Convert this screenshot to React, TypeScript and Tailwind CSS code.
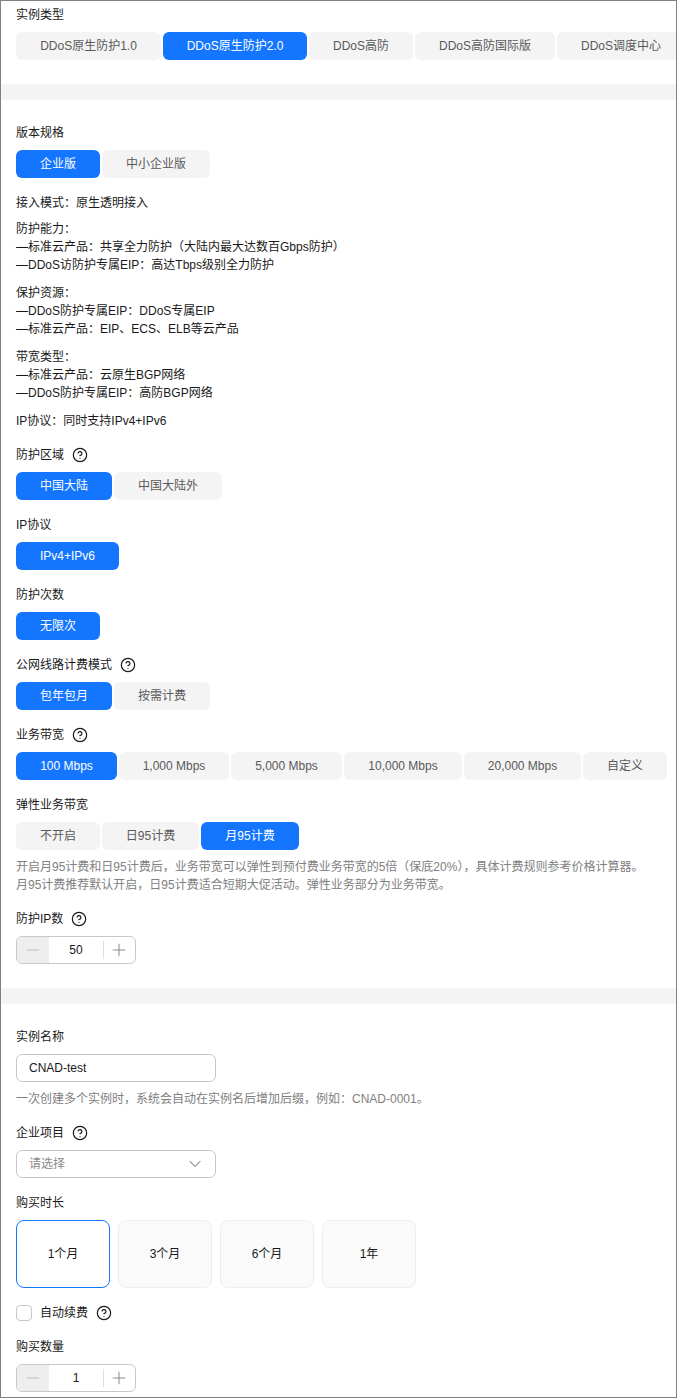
import { ChevronDown, CircleHelp, Minus, Plus } from "lucide-react";
import type { ReactNode } from "react";

type Opt = { text: string; width: string; active?: boolean };

function Label({ text, help }: { text: string; help?: boolean }) {
  return (
    <div className="flex h-[18px] items-center gap-[8px] pt-[2px] text-[12px] leading-[16px] text-[#191919]">
      <span>{text}</span>
      {help && <CircleHelp size={16} strokeWidth={1.75} className="text-[#191919]" />}
    </div>
  );
}

function Options({ items }: { items: Opt[] }) {
  return (
    <div className="mt-[9px] flex gap-[2px]">
      {items.map((o) => (
        <div
          key={o.text}
          className={
            o.active
              ? "flex h-[28px] shrink-0 items-center justify-center rounded-[6px] bg-[#1476ff] text-[12px] text-white " + o.width
              : "flex h-[28px] shrink-0 items-center justify-center rounded-[6px] bg-[#f4f4f4] text-[12px] text-[#595959] " + o.width
          }
        >
          {o.text}
        </div>
      ))}
    </div>
  );
}

function Field({ label, help, className, children }: { label: string; help?: boolean; className?: string; children: ReactNode }) {
  return (
    <div className={className}>
      <Label text={label} help={help} />
      {children}
    </div>
  );
}

function Stepper({ value }: { value: string }) {
  return (
    <div className="mt-[9px] flex h-[28px] w-[120px] items-center overflow-hidden rounded-[6px] border border-[#c7c7c7] text-[12px] text-[#191919]">
      <div className="flex h-full w-[32px] items-center justify-center bg-[#eeeeee] text-[#bbbbbb]">
        <Minus size={20} strokeWidth={1.2} />
      </div>
      <div className="flex h-[18px] w-[55px] items-center justify-center border-r border-[#dfdfdf]">{value}</div>
      <div className="flex h-full w-[31px] items-center justify-center pr-[2px] text-[#8a8a8a]">
        <Plus size={20} strokeWidth={1.2} />
      </div>
    </div>
  );
}

function Band() {
  return <div className="h-[16px] bg-[#f4f4f4]" />;
}

const durations = ["1个月", "3个月", "6个月", "1年"];

export default function App() {
  return (
    <div className="h-[1398px] w-[677px] overflow-hidden border border-[#808080] bg-white text-[12px] font-['Liberation_Sans','Noto_Sans_CJK_SC',sans-serif]">
      <section className="overflow-hidden pb-[24px] pl-[15px] pt-[4px]">
        <Field label="实例类型">
          <Options
            items={[
              { text: "DDoS原生防护1.0", width: "w-[145px]" },
              { text: "DDoS原生防护2.0", width: "w-[144px]", active: true },
              { text: "DDoS高防", width: "w-[104px]" },
              { text: "DDoS高防国际版", width: "w-[140px]" },
              { text: "DDoS调度中心", width: "w-[128px]" },
            ]}
          />
        </Field>
      </section>
      <Band />
      <section className="pb-[24px] pl-[15px] pt-[23px]">
        <Field label="版本规格">
          <Options
            items={[
              { text: "企业版", width: "w-[84px]", active: true },
              { text: "中小企业版", width: "w-[108px]" },
            ]}
          />
        </Field>
        <div className="mt-[16px] flex flex-col gap-[8px] text-[12px] leading-[18px] text-[#191919]">
          <p>接入模式：原生透明接入</p>
          <p>
            防护能力：
            <br />
            —标准云产品：共享全力防护（大陆内最大达数百Gbps防护）
            <br />
            —DDoS访防护专属EIP：高达Tbps级别全力防护
          </p>
          <p className="mt-[2px]">
            保护资源：
            <br />
            —DDoS防护专属EIP：DDoS专属EIP
            <br />
            —标准云产品：EIP、ECS、ELB等云产品
          </p>
          <p className="mt-[2px]">
            带宽类型：
            <br />
            —标准云产品：云原生BGP网络
            <br />
            —DDoS防护专属EIP：高防BGP网络
          </p>
          <p className="mt-[2px]">IP协议：同时支持IPv4+IPv6</p>
        </div>
        <Field label="防护区域" help className="mt-[15px]">
          <Options
            items={[
              { text: "中国大陆", width: "w-[96px]", active: true },
              { text: "中国大陆外", width: "w-[108px]" },
            ]}
          />
        </Field>
        <Field label="IP协议" className="mt-[15px]">
          <Options items={[{ text: "IPv4+IPv6", width: "w-[103px]", active: true }]} />
        </Field>
        <Field label="防护次数" className="mt-[15px]">
          <Options items={[{ text: "无限次", width: "w-[84px]", active: true }]} />
        </Field>
        <Field label="公网线路计费模式" help className="mt-[15px]">
          <Options
            items={[
              { text: "包年包月", width: "w-[96px]", active: true },
              { text: "按需计费", width: "w-[96px]" },
            ]}
          />
        </Field>
        <Field label="业务带宽" help className="mt-[15px]">
          <Options
            items={[
              { text: "100 Mbps", width: "w-[101px]", active: true },
              { text: "1,000 Mbps", width: "w-[110px]" },
              { text: "5,000 Mbps", width: "w-[111px]" },
              { text: "10,000 Mbps", width: "w-[118px]" },
              { text: "20,000 Mbps", width: "w-[117px]" },
              { text: "自定义", width: "w-[84px]" },
            ]}
          />
        </Field>
        <Field label="弹性业务带宽" className="mt-[15px]">
          <Options
            items={[
              { text: "不开启", width: "w-[84px]" },
              { text: "日95计费", width: "w-[97px]" },
              { text: "月95计费", width: "w-[98px]", active: true },
            ]}
          />
        </Field>
        <p className="mt-[8px] text-[12px] leading-[18px] text-[#808080]">
          开启月95计费和日95计费后，业务带宽可以弹性到预付费业务带宽的5倍（保底20%），具体计费规则参考价格计算器。
          <br />
          月95计费推荐默认开启，日95计费适合短期大促活动。弹性业务部分为业务带宽。
        </p>
        <Field label="防护IP数" help className="mt-[15px]">
          <Stepper value="50" />
        </Field>
      </section>
      <Band />
      <section className="pl-[15px] pt-[23px]">
        <Field label="实例名称">
          <div className="mt-[9px] flex h-[28px] w-[200px] items-center rounded-[6px] border border-[#c7c7c7] px-[12px] text-[12px] text-[#191919]">
            CNAD-test
          </div>
        </Field>
        <p className="mt-[8px] text-[12px] leading-[18px] text-[#808080]">
          一次创建多个实例时，系统会自动在实例名后增加后缀，例如：CNAD-0001。
        </p>
        <Field label="企业项目" help className="mt-[15px]">
          <div className="mt-[9px] flex h-[28px] w-[200px] items-center justify-between rounded-[6px] border border-[#c7c7c7] pl-[12px] pr-[10px] text-[12px] text-[#8a8a8a]">
            <span>请选择</span>
            <ChevronDown size={20} strokeWidth={1.2} className="text-[#595959]" />
          </div>
        </Field>
        <Field label="购买时长" className="mt-[15px]">
          <div className="mt-[9px] flex gap-[8px]">
            {durations.map((d, i) => (
              <div
                key={d}
                className={
                  i === 0
                    ? "flex h-[68px] w-[94px] items-center justify-center rounded-[8px] border border-[#1476ff] bg-white text-[12px] text-[#191919]"
                    : "flex h-[68px] w-[94px] items-center justify-center rounded-[8px] border border-[#eeeeee] bg-[#fafafa] text-[12px] text-[#191919]"
                }
              >
                {d}
              </div>
            ))}
          </div>
        </Field>
        <div className="mt-[17px] flex h-[16px] items-center text-[12px] text-[#191919]">
          <span className="h-[16px] w-[16px] rounded-[4px] border border-[#c7c7c7] bg-white" />
          <span className="ml-[8px]">自动续费</span>
          <CircleHelp size={16} strokeWidth={1.75} className="ml-[8px] text-[#191919]" />
        </div>
        <Field label="购买数量" className="mt-[16px]">
          <Stepper value="1" />
        </Field>
      </section>
    </div>
  );
}
